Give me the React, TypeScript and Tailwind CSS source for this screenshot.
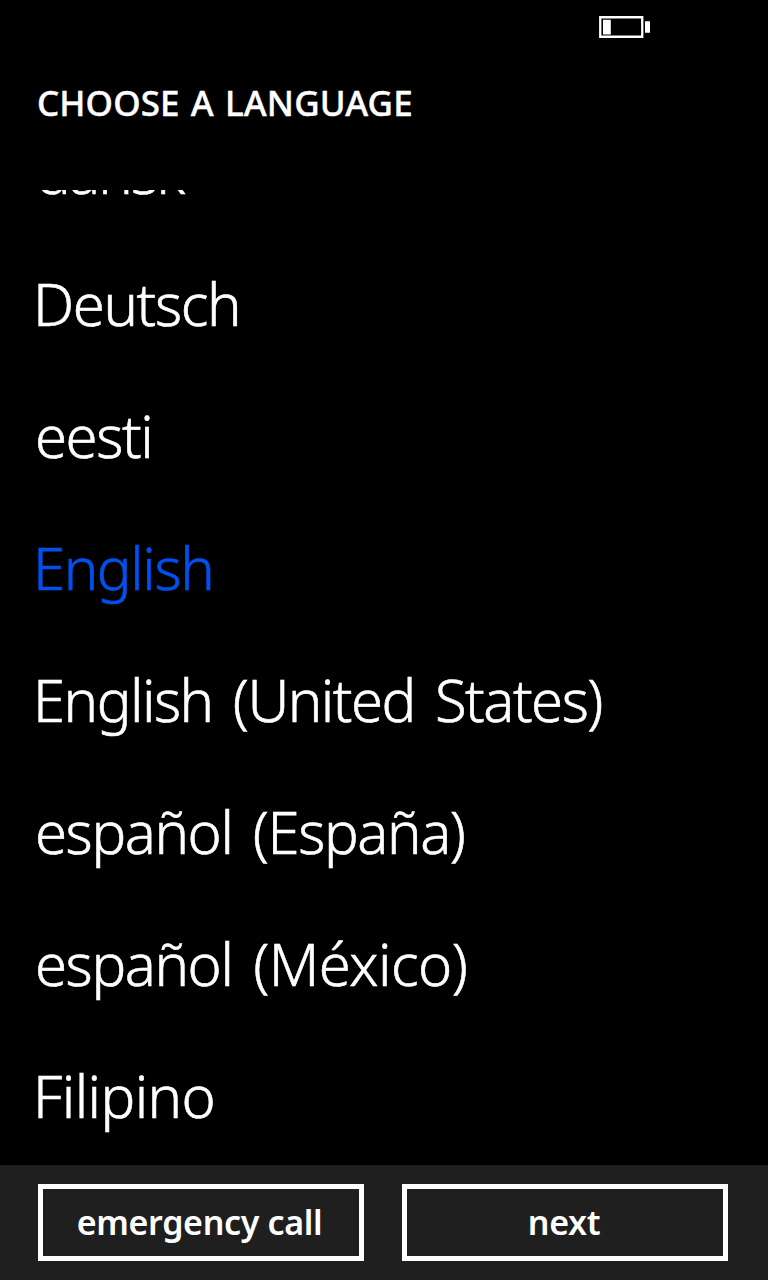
import React from 'react';

type Language = { name: string; region?: string; style: string; regionStyle?: string };

const languages: Language[] = [
  { name: 'dansk', style: 'pl-[36px] tracking-[-1.8px]' },
  { name: 'Deutsch', style: 'pl-[33px] tracking-[-1.4px]' },
  { name: 'eesti', style: 'pl-[35px] tracking-[-1.4px]' },
  { name: 'English', style: 'pl-[33px] tracking-[-1.4px] text-[#0050ef]' },
  { name: 'English', region: '(United States)', style: 'pl-[33px] tracking-[-1.5px] [word-spacing:6.5px]' },
  { name: 'español', region: '(España)', style: 'pl-[35px] tracking-[-1.4px] [word-spacing:6.5px]' },
  { name: 'español', region: '(México)', style: 'pl-[35px] tracking-[-1.4px] [word-spacing:6px]', regionStyle: 'tracking-[-0.5px]' },
  { name: 'Filipino', style: 'pl-[33px] tracking-[-0.6px]' },
];

export default function App() {
  return (
    <main className="flex h-[1280px] w-[768px] flex-col overflow-hidden bg-black font-['Noto_Sans',sans-serif] text-white">
      <div className="flex h-[54px] shrink-0 justify-end pr-[118px] pt-[15px]">
        <svg width="51" height="24" viewBox="0 0 51 24" aria-label="Battery">
          <path d="M1.25 2.25h42v19.5h-42z" fill="none" stroke="white" strokeWidth="2.3" />
          <path d="M4 4.7h7.8v14.8H4zM46 6.3h5v11.5h-5z" fill="white" />
        </svg>
      </div>
      <h1 className="h-[136px] shrink-0 pl-[37px] pt-[24px] text-[35px] font-medium leading-[50px] tracking-[0.1px] [-webkit-text-stroke:0.4px_currentColor] [word-spacing:2px]">CHOOSE A LANGUAGE</h1>
      <div className="h-[975px] shrink-0 overflow-hidden">
        <ul className="-mt-[58px] text-[58px] font-light leading-[80px] [-webkit-text-stroke:0.6px_currentColor]">
          {languages.map((l) => (
            <li key={l.name + (l.region ?? '')} className={`h-[132px] whitespace-nowrap ${l.style}`}>
              {l.name}
              {l.region && <span className={l.regionStyle}> {l.region}</span>}
            </li>
          ))}
        </ul>
      </div>
      <footer className="flex h-[115px] shrink-0 gap-[38px] bg-[#1f1f1f] pl-[38px] pt-[19px] text-[34px] font-semibold tracking-[-0.35px]">
        <button className="h-[77px] w-[326px] border-[5px] border-white pr-[3px]">emergency call</button>
        <button className="h-[77px] w-[326px] border-[5px] border-white pr-[2px]">next</button>
      </footer>
    </main>
  );
}
